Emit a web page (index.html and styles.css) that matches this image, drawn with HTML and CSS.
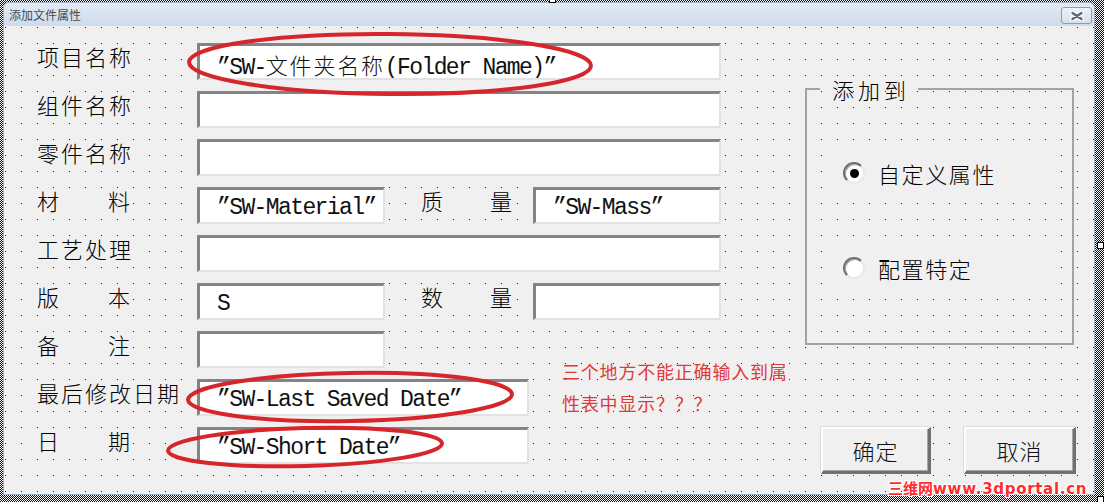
FILE: index.html
```html
<!DOCTYPE html>
<html lang="zh-CN">
<head>
<meta charset="utf-8">
<title>添加文件属性</title>
<link rel="stylesheet" href="styles.css">
</head>
<body>
<div class="designer">
  <div class="window">
    <div class="titlebar">
      <span class="title">添加文件属性</span>
      <span class="close"><svg width="14" height="10" viewBox="0 0 14 10"><path d="M2.5 2 11.5 8M11.5 2 2.5 8" fill="none" stroke="#fff" stroke-width="5" stroke-linecap="round"/><path d="M2.5 2 11.5 8M11.5 2 2.5 8" fill="none" stroke="#5f6875" stroke-width="2.4" stroke-linecap="round"/></svg></span>
    </div>
    <div class="client">
      <div class="fields">
        <div class="row"><div class="lbl"><span class="t">项目名称</span></div><div class="box w-full">”SW-<span class="cjk">文件夹名称</span>(Folder Name)”</div></div>
        <div class="row"><div class="lbl"><span class="t">组件名称</span></div><div class="box w-full"></div></div>
        <div class="row"><div class="lbl"><span class="t">零件名称</span></div><div class="box w-full"></div></div>
        <div class="row"><div class="lbl"><span class="t spread"><span>材</span><span>料</span></span></div><div class="box w-short">”SW-Material”</div><div class="lbl2"><span class="t spread"><span>质</span><span>量</span></span></div><div class="box w-short">”SW-Mass”</div></div>
        <div class="row"><div class="lbl"><span class="t">工艺处理</span></div><div class="box w-full"></div></div>
        <div class="row"><div class="lbl"><span class="t spread"><span>版</span><span>本</span></span></div><div class="box w-short">S</div><div class="lbl2"><span class="t spread"><span>数</span><span>量</span></span></div><div class="box w-short"></div></div>
        <div class="row"><div class="lbl"><span class="t spread"><span>备</span><span>注</span></span></div><div class="box w-short"></div></div>
        <div class="row"><div class="lbl"><span class="t">最后修改日期</span></div><div class="box w-mid">”SW-Last Saved Date”</div></div>
        <div class="row"><div class="lbl"><span class="t spread"><span>日</span><span>期</span></span></div><div class="box w-mid">”SW-Short Date”</div></div>
      </div>
      <div class="side">
        <fieldset class="frame">
          <legend>添加到</legend>
          <div class="radios">
            <div class="opt"><span class="radio on"></span><span>自定义属性</span></div>
            <div class="opt"><span class="radio"></span><span>配置特定</span></div>
          </div>
        </fieldset>
        <div class="buttons">
          <button class="btn ok">确定</button>
          <button class="btn cancel">取消</button>
        </div>
      </div>
    </div>
  </div>
  <span class="handle h-top"></span>
  <span class="handle h-right"></span>
  <span class="handle h-corner"></span>
</div>
<div class="annot">
  <svg width="1108" height="502" viewBox="0 0 1108 502">
    <g fill="none" stroke="#d7262b" stroke-width="4">
      <ellipse cx="390" cy="64" rx="201" ry="30" transform="rotate(0.5 390 64)"/>
      <ellipse cx="350" cy="397" rx="162" ry="24" transform="rotate(-1 350 397)"/>
      <ellipse cx="305" cy="447" rx="137" ry="19" transform="rotate(-1.5 305 447)"/>
    </g>
  </svg>
  <div class="note">三个地方不能正确输入到属<br>性表中显示？？？</div>
</div>
<div class="watermark"><span class="cn">三维网</span><span class="url">www.3dportal.cn</span></div>
</body>
</html>
```
FILE: styles.css
```css
* { box-sizing: border-box; }
html, body { margin: 0; padding: 0; }
body {
  width: 1108px;
  height: 502px;
  overflow: hidden;
  position: relative;
  background: #fff;
  font-family: "Noto Sans CJK SC", "Noto Sans", sans-serif;
  color: #000;
}
.designer {
  position: relative;
  width: 1104px;
  height: 502px;
  padding: 2px 9px 7px 3px;
  background: repeating-conic-gradient(#111 0 25%, #fafafa 0 50%) 0 0 / 2px 2px;
}
.window {
  height: 493px;
  border: 1px solid #9fb0c5;
  border-radius: 6px 6px 0 0;
  background: #f0f0f0;
  display: flex;
  flex-direction: column;
  overflow: hidden;
}
.titlebar {
  height: 23px;
  flex: none;
  display: flex;
  align-items: flex-start;
  justify-content: space-between;
  padding: 0 2px 0 5px;
  background: linear-gradient(#e2eaf4, #cddbeb);
}
.title { font-size: 12px; line-height: 23px; color: #4b4b4b; }
.close {
  margin-top: 4px;
  width: 31px;
  height: 17px;
  border: 1px solid #8e9cae;
  border-radius: 3px;
  background: linear-gradient(#eef2f7, #d6dfea);
  display: flex;
  align-items: center;
  justify-content: center;
}
.client {
  flex: 1;
  display: flex;
  padding: 17px 18px 0 33px;
  background-color: #f0f0f0;
  background-image: conic-gradient(at 1px 1px, #0000 75%, #1e1e1e 0);
  background-size: 16px 16px;
  background-position: 1px 1px;
}
.fields {
  width: 684px;
  flex: none;
  display: flex;
  flex-direction: column;
  gap: 11px;
}
.row { display: flex; height: 37px; }
.lbl { width: 160px; flex: none; }
.lbl2 { width: 112px; margin-left: 36px; flex: none; }
.t {
  display: inline-block;
  margin-top: 1px;
  height: 26px;
  line-height: 24px;
  font-size: 22px;
  font-weight: 300;
  letter-spacing: 2px;
  padding-right: 4px;
  background: #f0f0f0;
  white-space: nowrap;
}
.t.spread {
  display: flex;
  justify-content: space-between;
  width: 93px;
  letter-spacing: 0;
  padding: 0;
}
.lbl2 .t.spread { width: 91px; }
.box {
  flex: none;
  height: 37px;
  background: #fff;
  border-style: solid;
  border-width: 3px 2px 2px 3px;
  border-color: #848484 #e2e2e2 #e2e2e2 #848484;
  padding: 3px 0 0 17px;
  font-family: "Liberation Mono", "Noto Sans CJK SC", monospace;
  font-size: 23px;
  letter-spacing: -1.6px;
  line-height: 31px;
  color: #111;
  white-space: nowrap;
  overflow: hidden;
}
.w-full { width: 524px; }
.w-short { width: 188px; }
.w-mid { width: 332px; }
.cjk {
  font-family: "Noto Sans CJK SC", sans-serif;
  font-size: 22px;
  font-weight: 300;
  letter-spacing: 1.8px;
}
.side {
  margin-left: 84px;
  width: 271px;
  flex: none;
  display: flex;
  flex-direction: column;
}
.frame {
  margin: 34px 0 0 0;
  width: 269px;
  border: 2px solid #a3a3a3;
  padding: 0 0 52px 13px;
  min-inline-size: 0;
}
.frame legend {
  padding: 0 8px 0 12px;
  font-size: 22px;
  font-weight: 300;
  line-height: 24px;
  letter-spacing: 4px;
}
.radios {
  padding: 49px 0 0 15px;
  display: flex;
  flex-direction: column;
  gap: 49px;
}
.opt {
  height: 46px;
  width: 215px;
  display: flex;
  align-items: center;
  gap: 13px;
  padding-left: 8px;
  background: #f0f0f0;
  font-size: 22px;
  font-weight: 300;
  letter-spacing: 1.6px;
}
.radio {
  flex: none;
  width: 22px;
  height: 22px;
  border-radius: 50%;
  background: #fff;
  border: 2px solid;
  border-color: #6f6f6f #e9e9e9 #e9e9e9 #6f6f6f;
  box-shadow: inset 1px 1px 0 #a5a5a5;
  display: flex;
  align-items: center;
  justify-content: center;
}
.radio.on::after {
  content: "";
  width: 9px;
  height: 9px;
  border-radius: 50%;
  background: #000;
}
.buttons {
  display: flex;
  gap: 33px;
  margin-top: 82px;
  padding-left: 16px;
}
.btn {
  flex: none;
  height: 47px;
  width: 110px;
  padding: 0;
  background: #f0f0f0;
  border-style: solid;
  border-width: 2px 3px 3px 2px;
  border-color: #fff #707070 #707070 #fff;
  box-shadow: inset -1px -1px 0 #a6a6a6, -1px -1px 0 #dcdcdc;
  font-family: "Noto Sans CJK SC", sans-serif;
  font-size: 22px;
  font-weight: 300;
  letter-spacing: 1px;
  color: #111;
}
.btn.cancel { width: 112px; }
.handle {
  position: absolute;
  width: 7px;
  height: 7px;
  background: #fff;
  border: 1px solid #000;
}
.h-corner { left: 1097px; top: 496px; }
.h-right { left: 1097px; top: 242px; }
.h-top { left: 549px; top: -4px; }
.annot {
  position: absolute;
  left: 0;
  top: 0;
  width: 1108px;
  height: 502px;
  pointer-events: none;
}
.annot svg { position: absolute; left: 0; top: 0; }
.note {
  position: absolute;
  left: 562px;
  top: 355px;
  font-size: 18px;
  line-height: 32px;
  letter-spacing: 0.8px;
  color: #dd3b3b;
}
.watermark {
  position: absolute;
  left: 888px;
  top: 480px;
  font: bold 15px/16px "DejaVu Sans", sans-serif;
  color: #ff2e2e;
  text-shadow: 1px 0 #fff, -1px 0 #fff, 0 1px #fff, 0 -1px #fff, 1px 1px #fff, -1px -1px #fff, 1px -1px #fff, -1px 1px #fff;
}
.watermark .cn { font-family: "Noto Sans CJK SC", sans-serif; }
.watermark .url { letter-spacing: 0.7px; }
```
